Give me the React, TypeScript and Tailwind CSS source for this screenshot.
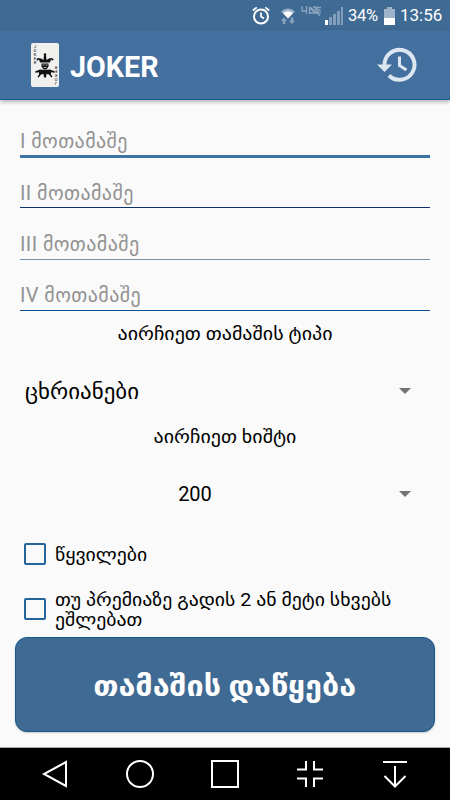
import React, { useState } from 'react';

const players = [
  { id: 1, label: 'I მოთამაშე', line: 'border-b-[3px] border-[#3b73a5]', height: 'h-[58px] pt-[26px]' },
  { id: 2, label: 'II მოთამაშე', line: 'border-b border-[#0f2f73]', height: 'h-[50px] pt-[20px]' },
  { id: 3, label: 'III მოთამაშე', line: 'border-b border-[#6f8fb0]', height: 'h-[52px] pt-[21px]' },
  { id: 4, label: 'IV მოთამაშე', line: 'border-b border-[#0a4f8f]', height: 'h-[51px] pt-[20px]' }
];

const StatusBar: React.FC = () => (
  <div className="flex h-[30px] items-center bg-[#3f6a93] pl-[252px] pt-px text-white">
    {/* Alarm */}
    <svg width="18" height="20" viewBox="0 0 18 20" fill="none" stroke="white" strokeWidth="2">
      <circle cx="9" cy="10.5" r="7" />
      <path d="M9 6.5v4l3 2M.8 4.5L4.8 1.3M17.2 4.5L13.2 1.3" strokeWidth="1.7" />
    </svg>
    {/* Wifi with traffic arrows */}
    <svg className="ml-[10px]" width="16" height="18" viewBox="0 0 16 18">
      <path d="M1 4.500Q8-1.500 15 4.500L8 11.500z" fill="#9db4ca" />
      <path d="M3 6Q8 2.500 13 6L8 11.500z" fill="white" />
      <path d="M4 10.500l3 3.200H5.200V17H2.800v-3.300H1zM12 17l3-3.200h-1.800V10.500h-2.400v3.300H9z" fill="#8ca7c0" />
    </svg>
    {/* LTE badge, switched off */}
    <svg className="mb-[9px] ml-[5px]" width="21" height="11" viewBox="0 0 21 11" fill="none" stroke="#8ca7c0" strokeWidth="1.300">
      <path d="M1 0v5h5M5.500 0v8M8.500 8V2l6 5H9M9 1l10 8.500M12 1h2.500v3M20 1.500h-4v5h4M16 4h3.500" />
    </svg>
    <svg className="ml-[3px]" width="19" height="18" viewBox="0 0 19 18" fill="#809db9">
      <path d="M0 13h3v5H0z" fill="white" />
      <path d="M4 10h3v8H4zM8 7h3v11H8zM12 4h3v14h-3zM16 0h2v18h-2z" />
    </svg>
    <span className="ml-[4px] w-[31px] whitespace-nowrap pt-px text-[16.5px] tracking-[-0.3px]">34%</span>
    <svg className="ml-[4px]" width="13" height="18" viewBox="0 0 13 18">
      <path d="M4 0h5v2h3v16H1V2h3z" fill="#9db4ca" />
      <path d="M1 11h11v7H1z" fill="white" />
    </svg>
    <span className="ml-[4px] pt-px text-[17px]">13:56</span>
  </div>
);

const JokerCard: React.FC = () => (
  <div className="relative h-[44px] w-[28px] rounded-[2px] bg-[#f0f0ef] text-[4px] leading-[4px] text-black">
    <div className="absolute left-[2px] top-[2px] flex w-[4px] flex-col items-center">
      {'JOKER'.split('').map((letter) => <span key={letter}>{letter}</span>)}
    </div>
    <div className="absolute bottom-[2px] right-px flex w-[4px] rotate-180 flex-col items-center">
      {'JOKER'.split('').map((letter) => <span key={letter}>{letter}</span>)}
    </div>
    <svg className="absolute left-[4px] top-[10px]" width="20" height="26" viewBox="0 0 20 26" fill="#111">
      <path d="M5 9.500L4 6.500 2 7 3 5l3 .500 2.500 1.500L9 2h2l.500 5L14 5.500 17 5l1 2-2-.500-1 3z" />
      <circle cx="2.500" cy="6.500" r="1" />
      <circle cx="17.500" cy="6.500" r="1" />
      <circle cx="10" cy="1.500" r="1.200" />
      <path d="M6.500 10.500h7v3l-2 3h-3l-2-3z" />
      <path d="M7.500 12h2M10.500 12h2M8.500 14.500h3" stroke="#eee" strokeWidth=".7" />
      <path d="M0 18.500l5-2 4 .5h2l4-.5 5 2-.5 1.200-3.500-.4v2.200l1.500 2.300-1.200.8-2.300-3L11.500 21l-.5 3.500H9L8.500 21l-2.500.6-2.300 3-1.200-.8L4 21.500v-2.200l-3.500.4z" />
    </svg>
  </div>
);

const Header: React.FC = () => (
  <header className="z-10 flex h-[70px] items-center border-b border-[#0b5f99] bg-[#43709f] pl-[31px] pr-[32px] shadow-[0_2px_4px_rgba(0,0,0,0.28)]">
    <JokerCard />
    <h1 className="ml-[11px] pt-[5px] text-[28.7px] font-bold leading-none text-white">JOKER</h1>
    <svg className="ml-auto" width="41" height="36" viewBox="0 0 41 36" fill="none" stroke="#dce6f0" strokeWidth="4">
      <path d="M7.500 18a15 15 0 1 1 4.500 10.500" />
      <path d="M22.500 9.500v9l7 4.500" strokeWidth="3" />
      <path d="M0 17.500h15L7.500 25z" fill="#dce6f0" stroke="none" />
    </svg>
  </header>
);

const Caption: React.FC<{ text: string; className: string }> = ({ text, className }) => (
  <p className={`scale-x-[1.11] text-center text-[18px] leading-[24px] text-black ${className}`}>{text}</p>
);

const Spinner: React.FC<{ value: string; className: string }> = ({ value, className }) => (
  <button className="flex h-[48px] w-full items-center pl-[5px] pr-[19px] text-black">
    <span className={`flex-1 ${className}`}>{value}</span>
    <svg width="12" height="6" viewBox="0 0 12 6" fill="#737373">
      <path d="M0 0h12L6 6z" />
    </svg>
  </button>
);

const CheckRow: React.FC<{ label: string; className: string }> = ({ label, className }) => {
  const [checked, setChecked] = useState(false);

  return (
    <label className={`flex items-center pl-[4px] ${className}`}>
      <input
        type="checkbox"
        checked={checked}
        onChange={() => setChecked(!checked)}
        className="h-[22px] w-[22px] shrink-0 appearance-none rounded-[2px] border-2 border-[#22649b] checked:bg-[#22649b]"
      />
      <span className="ml-[9px] w-[320px] origin-left scale-x-[1.097] pt-[2px] text-[18px] leading-[20px] text-black">{label}</span>
    </label>
  );
};

const NavBar: React.FC = () => (
  <nav className="flex h-[53px] items-center justify-between border-t border-[#a5aaa5] bg-black pl-[41px] pr-[41px]">
    <svg width="28" height="28" viewBox="0 0 28 28" fill="none" stroke="white" strokeWidth="2">
      <path d="M25 2v24L3 14z" />
    </svg>
    <svg width="28" height="28" viewBox="0 0 28 28" fill="none" stroke="white" strokeWidth="2">
      <circle cx="14" cy="14" r="13" />
    </svg>
    <svg width="28" height="28" viewBox="0 0 28 28" fill="none" stroke="white" strokeWidth="2">
      <path d="M1 1h26v26H1z" />
    </svg>
    <svg width="28" height="28" viewBox="0 0 28 28" fill="none" stroke="white" strokeWidth="2">
      <path d="M1 9.500h9V1M27 9.500h-9V1M1 18.500h9V27M27 18.500h-9V27" />
    </svg>
    <svg width="28" height="28" viewBox="0 0 28 28" fill="none" stroke="white" strokeWidth="2">
      <path d="M2 2h24M14 6v20M3.500 16L14 26.500 24.500 16" />
    </svg>
  </nav>
);

export default function App() {
  return (
    <div className="flex h-[800px] w-[450px] flex-col overflow-hidden bg-[#fafafa] font-['Roboto','DejaVu_Sans',sans-serif]">
      <StatusBar />
      <Header />

      <main className="flex flex-1 flex-col px-[20px]">
        {players.map((player) => (
          <input
            key={player.id}
            placeholder={player.label}
            className={`w-full shrink-0 bg-transparent text-[20px] tracking-[0.4px] text-black outline-none placeholder:text-[#929292] ${player.height} ${player.line}`}
          />
        ))}

        <Caption text="აირჩიეთ თამაშის ტიპი" className="mt-[11px]" />
        <div className="mt-[21px]">
          <Spinner value="ცხრიანები" className="origin-left scale-x-[1.09] pt-[3px] text-left text-[21px]" />
        </div>
        <Caption text="აირჩიეთ ხიშტი" className="mt-[10px]" />
        <div className="mt-[21px]">
          <Spinner value="200" className="pr-[34px] text-center text-[20px]" />
        </div>

        <CheckRow className="mt-[20px] h-[32px]" label="წყვილები" />
        <CheckRow className="mt-[19px] h-[40px]" label="თუ პრემიაზე გადის 2 ან მეტი სხვებს ეშლებათ" />

        <button className="-mx-[5px] mt-[8px] h-[95px] shrink-0 rounded-[12px] border border-[#17568c] bg-[#3f6a93] pt-[4px] text-[28px] font-bold text-white shadow-[0_1px_2px_rgba(0,0,0,0.2)]">
          <span className="inline-block scale-x-[1.09]">თამაშის დაწყება</span>
        </button>
      </main>

      <NavBar />
    </div>
  );
}
